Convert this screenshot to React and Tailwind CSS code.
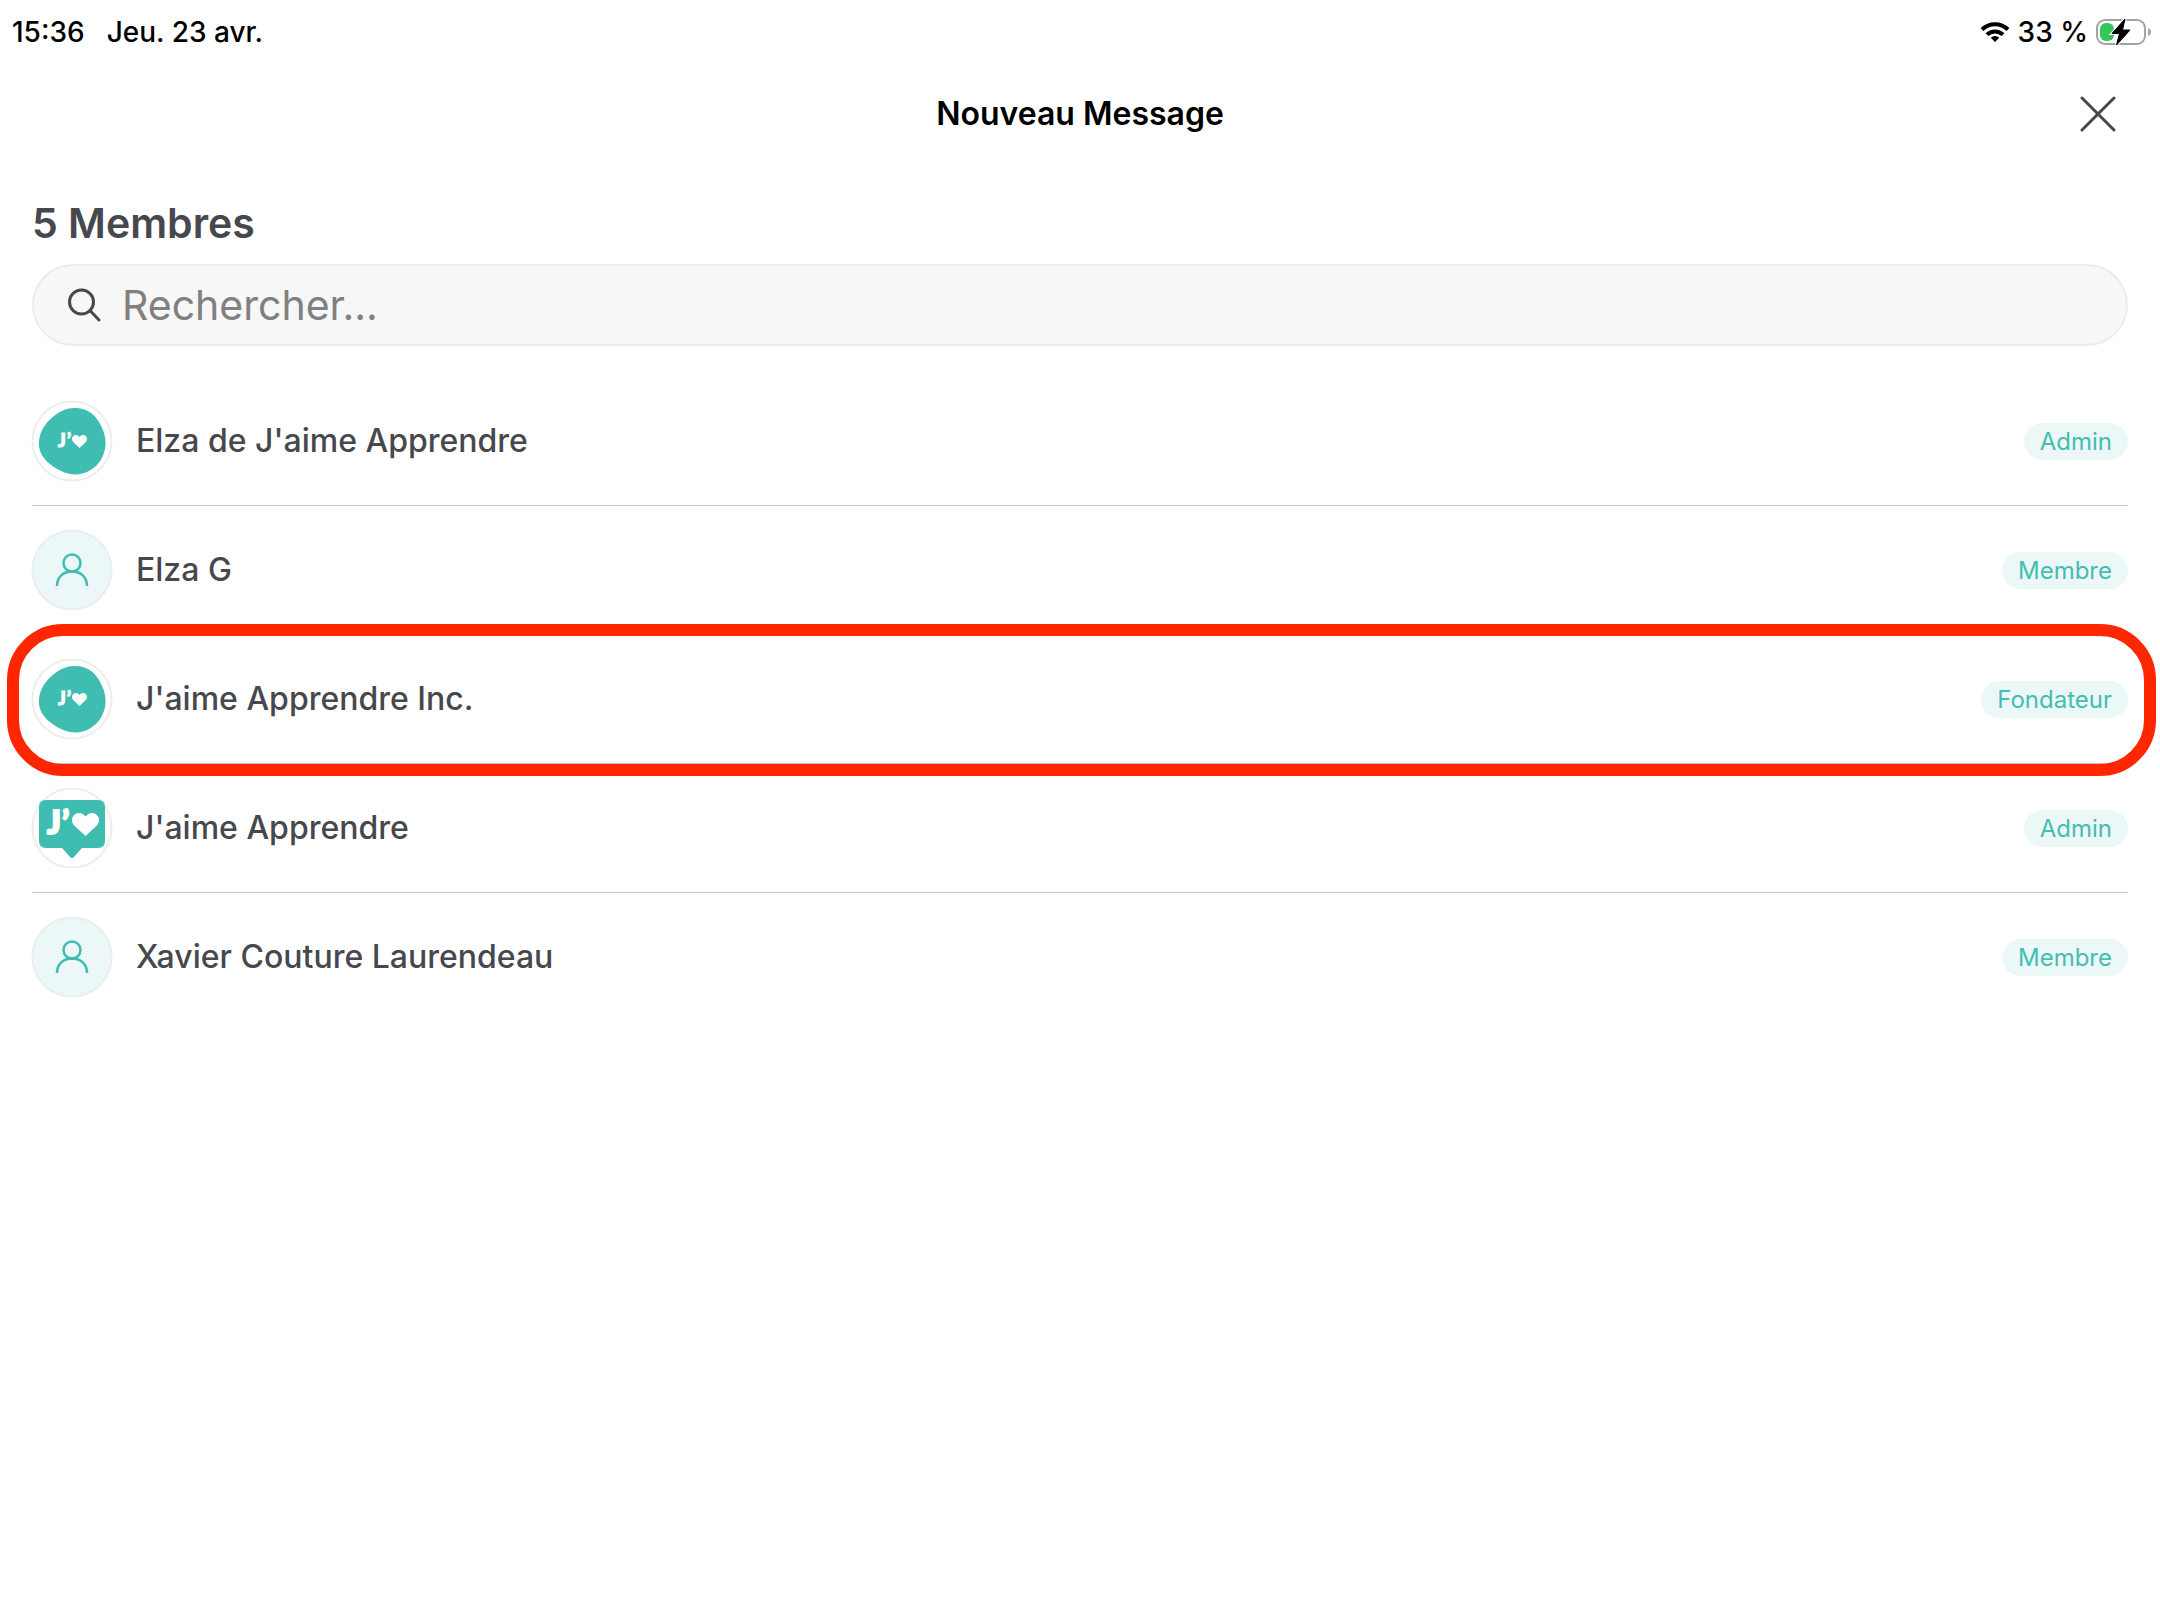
const TEAL = "#40bdb1";

function HeartShape({ x, y, w, h }) {
  return (
    <svg x={x} y={y} width={w} height={h} viewBox="0 0 24 20" preserveAspectRatio="none">
      <path
        d="M12 20L2 10.8C-.6 8.300-.6 4.300 1.800 1.900C4.400-.6 8-.5 10.300 1.600L12 3.100L13.700 1.600C16-.5 19.600-.6 22.200 1.900C24.600 4.300 24.600 8.300 22 10.800Z"
        fill="#fff"
      />
    </svg>
  );
}

function BlobAvatar() {
  return (
    <svg viewBox="0 0 80 80" className="size-20 shrink-0 overflow-visible" aria-hidden="true">
      <circle cx="40" cy="40" r="39.500" fill="#fff" stroke="#eeeef1" strokeWidth="2" />
      <path
        d="M42 7C53 6.500 62 12 67 21C71 28 74 35 73.500 44C73 54 67 65 57 70C49 74.500 38 74.500 29 70C19 65 8 57 7 45C6 32 13 22 22 15C28 10 35 7 42 7Z"
        fill={TEAL}
      />
      <g fill="#fff" fontFamily="Lato, sans-serif" fontSize="18" fontWeight="900" stroke="#fff">
        <text x="26" y="46">J</text>
        <text x="35" y="46">’</text>
      </g>
      <HeartShape x={40} y={34} w={15} h={13} />
    </svg>
  );
}

function BubbleAvatar() {
  return (
    <svg viewBox="0 0 80 80" className="size-20 shrink-0 overflow-visible" aria-hidden="true">
      <circle cx="40" cy="40" r="39.500" fill="#fff" stroke="#eeeef1" strokeWidth="2" />
      <path
        d="M14 12H66Q73 12 73 19V53Q73 60 66 60H50L41.500 69.500Q40 71 38.500 69.500L30 60H14Q7 60 7 53V19Q7 12 14 12Z"
        fill={TEAL}
      />
      <g fill="#fff" fontFamily="Lato, sans-serif" fontSize="32" fontWeight="900" stroke="#fff" strokeWidth="2" strokeLinejoin="round">
        <text x="15" y="46">J</text>
        <text x="30" y="46">’</text>
      </g>
      <HeartShape x={40} y={25} w={27} h={23} />
    </svg>
  );
}

function PersonAvatar() {
  return (
    <svg viewBox="0 0 80 80" className="size-20 shrink-0 overflow-visible" fill="none" aria-hidden="true">
      <circle cx="40" cy="40" r="39.500" fill="#ebf8f7" stroke="#e9eeee" strokeWidth="2" />
      <circle cx="40" cy="33" r="8.500" stroke={TEAL} strokeWidth="2.500" />
      <path d="M25 56C25 47 31.500 41.500 40 41.500S55 47 55 56" stroke={TEAL} strokeWidth="2.500" />
    </svg>
  );
}

const members = [
  { name: "Elza de J'aime Apprendre", role: "Admin", Avatar: BlobAvatar },
  { name: "Elza G", role: "Membre", Avatar: PersonAvatar },
  { name: "J'aime Apprendre Inc.", role: "Fondateur", Avatar: BlobAvatar, highlighted: true },
  { name: "J'aime Apprendre", role: "Admin", Avatar: BubbleAvatar },
  { name: "Xavier Couture Laurendeau", role: "Membre", Avatar: PersonAvatar },
];

function StatusBar() {
  return (
    <div className="flex h-16 items-center justify-between pr-2 pl-3 text-[28px] font-medium text-black">
      <div className="flex gap-[22px]">
        <span>15:36</span>
        <span>Jeu. 23 avr.</span>
      </div>
      <div className="flex items-center gap-2">
        <svg viewBox="0 0 30 22" className="h-[22px] w-[30px]" fill="none" stroke="#000" strokeWidth="4" aria-hidden="true">
          <path d="M2 8.500A18.500 18.500 0 0 1 28 8.500" />
          <path d="M7 13.700A11.400 11.400 0 0 1 23 13.700" />
          <path d="M15 21L10.800 16.800A6 6 0 0 1 19.200 16.800Z" fill="#000" stroke="none" />
        </svg>
        <span>33 %</span>
        <svg viewBox="0 0 56 28" className="h-7 w-14" aria-hidden="true">
          <rect x="1" y="2" width="48" height="24" rx="8" fill="none" stroke="#a3a3a3" strokeWidth="2" />
          <path d="M52 10Q55 11 55 14T52 18Z" fill="#a3a3a3" />
          <rect x="4" y="5" width="14" height="18" rx="6" fill="#34c759" />
          <path
            d="M29 1L16 15.500H23.500L20.500 27L34 12H26.500Z"
            fill="#000"
            stroke="#fff"
            strokeWidth="3"
            paintOrder="stroke"
          />
          <path d="M29 1L16 15.500H23.500L20.500 27L34 12H26.500Z" fill="#000" stroke="#000" strokeLinejoin="round" />
        </svg>
      </div>
    </div>
  );
}

function MemberRow({ name, role, Avatar, highlighted }) {
  return (
    <li className="relative flex items-center gap-6 border-b border-[#c6c6c8] py-6 last:border-b-0">
      <Avatar />
      <span className="grow text-[32px] leading-[42px] font-medium text-[#46484d]">{name}</span>
      <span className="rounded-full bg-[#ebf8f7] px-4 text-[24px] leading-[37px] text-[#45bdb0]">{role}</span>
      {highlighted && (
        <span className="pointer-events-none absolute -top-[11px] -right-7 -bottom-[13px] -left-[25px] rounded-[56px] border-12 border-[#ff2600]" />
      )}
    </li>
  );
}

export default function App() {
  return (
    <div className="min-h-screen bg-white font-[Inter,sans-serif]">
      <StatusBar />
      <header className="grid h-[100px] grid-cols-[1fr_auto_1fr] items-center px-8">
        <h1 className="col-start-2 text-[32px] leading-[42px] font-semibold text-black">Nouveau Message</h1>
        <button type="button" aria-label="Fermer" className="mr-3 justify-self-end">
          <svg viewBox="0 0 36 36" className="size-9" stroke="#46484d" strokeWidth="3" strokeLinecap="round" aria-hidden="true">
            <path d="M2 2L34 34M34 2L2 34" />
          </svg>
        </button>
      </header>
      <main className="px-8 pt-8">
        <h2 className="text-[41px] leading-[54px] font-semibold text-[#46484d]">5 Membres</h2>
        <label className="mt-[14px] flex h-[82px] items-center gap-5 rounded-full border-2 border-[#ececec] bg-[#f7f7f7] px-[34px]">
          <svg viewBox="0 0 34 34" className="size-[34px] shrink-0" fill="none" stroke="#46484d" strokeWidth="3" strokeLinecap="round" aria-hidden="true">
            <circle cx="13.500" cy="14" r="12" />
            <path d="M22 22.500L31 32" />
          </svg>
          <input
            type="search"
            aria-label="Rechercher"
            placeholder="Rechercher..."
            className="min-w-0 grow bg-transparent text-[41px] leading-[54px] outline-none placeholder:text-[#808080]"
          />
        </label>
        <ul className="mt-[31px]">
          {members.map((m) => (
            <MemberRow key={m.name} {...m} />
          ))}
        </ul>
      </main>
    </div>
  );
}
